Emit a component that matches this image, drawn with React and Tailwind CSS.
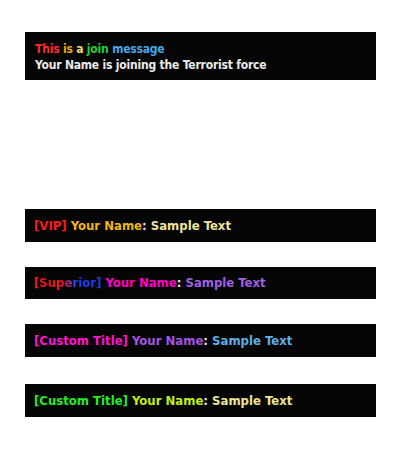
const font = { fontFamily: '"DejaVu Sans Condensed", "DejaVu Sans", sans-serif' }

function ChatBar({ className = '', children }) {
  return (
    <div className={`flex w-[351px] items-center whitespace-pre bg-[#050505] px-[9px] text-[13px] font-bold ${className}`} style={font}>
      {children}
    </div>
  )
}

export default function App() {
  return (
    <div className="min-h-[450px] w-[400px] bg-white pl-[25px] pt-[32px]">
      <div className="flex h-[48px] w-[351px] flex-col justify-center bg-[#050505] px-[10px] pt-[1px] text-[12px] font-bold leading-[16px] tracking-[-0.2px]" style={font}>
        <div>
          <span className="text-[#ff2b2b]">This </span>
          <span className="text-[#e9a514]">is </span>
          <span className="text-[#e6df72]">a </span>
          <span className="text-[#25d02e]">join </span>
          <span className="text-[#4ba6e6]">message</span>
        </div>
        <div className="text-[#ececec]">Your Name is joining the Terrorist force</div>
      </div>

      <ChatBar className="mt-[129px] h-[33px]">
        <span className="text-[#ff1a1a]">[VIP] </span>
        <span className="text-[#f4b514]">Your Name</span>
        <span className="text-[#e6e6e6]">: </span>
        <span className="text-[#efe39a]">Sample Text</span>
      </ChatBar>

      <ChatBar className="mt-[25px] h-[32px]">
        <span className="bg-linear-to-r from-[#ff1010] from-40% via-[#c01060] via-50% to-[#1c3cff] to-62% bg-clip-text text-transparent">[Superior]</span>
        <span> </span>
        <span className="text-[#ff00c8]">Your Name</span>
        <span className="text-[#e6e6e6]">: </span>
        <span className="text-[#a35ee0]">Sample Text</span>
      </ChatBar>

      <ChatBar className="mt-[25px] h-[33px]">
        <span className="text-[#ff14d4]">[Custom Title] </span>
        <span className="text-[#a653e6]">Your Name</span>
        <span className="text-[#e6e6e6]">: </span>
        <span className="text-[#5eaeea]">Sample Text</span>
      </ChatBar>

      <ChatBar className="mt-[27px] h-[33px]">
        <span className="text-[#1ff01f]">[Custom Title] </span>
        <span className="text-[#c6ee10]">Your Name</span>
        <span className="text-[#e6e6e6]">: </span>
        <span className="text-[#ebe793]">Sample Text</span>
      </ChatBar>
    </div>
  )
}
